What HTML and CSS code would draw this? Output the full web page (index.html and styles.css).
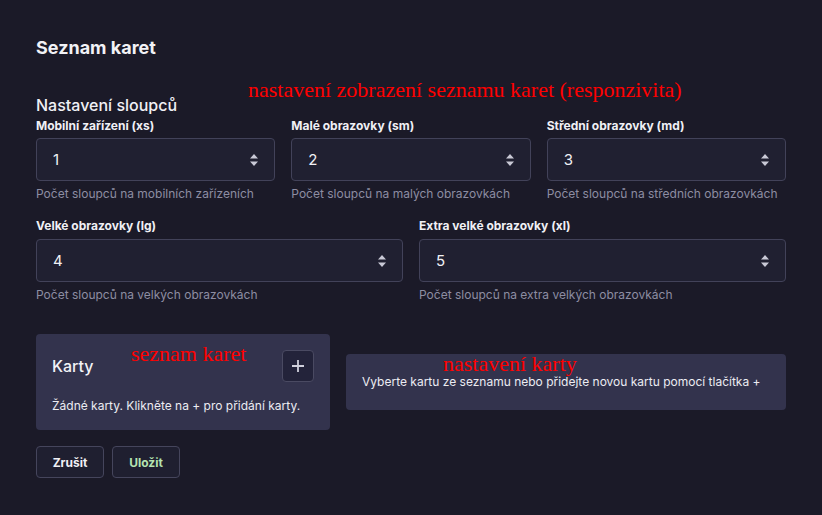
FILE: index.html
```html
<!DOCTYPE html>
<html lang="cs">
<head>
<meta charset="utf-8">
<link rel="stylesheet" href="styles.css">
</head>
<body>
<div class="page">
  <h1 class="title">Seznam karet</h1>
  <div class="section">
    <h2 class="subtitle">Nastavení sloupců</h2>
    <span class="note note-top">nastavení zobrazení seznamu karet (responzivita)</span>
    <div class="grid grid3">
      <div class="field">
        <label class="label">Mobilní zařízení (xs)</label>
        <div class="input"><span>1</span><svg class="spin" width="10" height="14" viewBox="0 0 10 14"><path d="M5 1 L9 5.5 H1 Z M5 13 L9 8.5 H1 Z" fill="#c9c9d6"/></svg></div>
        <div class="help">Počet sloupců na mobilních zařízeních</div>
      </div>
      <div class="field">
        <label class="label">Malé obrazovky (sm)</label>
        <div class="input"><span>2</span><svg class="spin" width="10" height="14" viewBox="0 0 10 14"><path d="M5 1 L9 5.5 H1 Z M5 13 L9 8.5 H1 Z" fill="#c9c9d6"/></svg></div>
        <div class="help">Počet sloupců na malých obrazovkách</div>
      </div>
      <div class="field">
        <label class="label">Střední obrazovky (md)</label>
        <div class="input"><span>3</span><svg class="spin" width="10" height="14" viewBox="0 0 10 14"><path d="M5 1 L9 5.5 H1 Z M5 13 L9 8.5 H1 Z" fill="#c9c9d6"/></svg></div>
        <div class="help">Počet sloupců na středních obrazovkách</div>
      </div>
    </div>
    <div class="grid grid2">
      <div class="field">
        <label class="label">Velké obrazovky (lg)</label>
        <div class="input"><span>4</span><svg class="spin" width="10" height="14" viewBox="0 0 10 14"><path d="M5 1 L9 5.5 H1 Z M5 13 L9 8.5 H1 Z" fill="#c9c9d6"/></svg></div>
        <div class="help">Počet sloupců na velkých obrazovkách</div>
      </div>
      <div class="field">
        <label class="label">Extra velké obrazovky (xl)</label>
        <div class="input"><span>5</span><svg class="spin" width="10" height="14" viewBox="0 0 10 14"><path d="M5 1 L9 5.5 H1 Z M5 13 L9 8.5 H1 Z" fill="#c9c9d6"/></svg></div>
        <div class="help">Počet sloupců na extra velkých obrazovkách</div>
      </div>
    </div>
  </div>

  <div class="cards">
    <div class="list-box">
      <span class="note note-list">seznam karet</span>
      <div class="list-head">
        <span class="list-title">Karty</span>
        <button class="add-btn"><svg width="14" height="14" viewBox="0 0 14 14"><path d="M7 1 V13 M1 7 H13" stroke="#d0d0dc" stroke-width="1.8"/></svg></button>
      </div>
      <div class="list-empty">Žádné karty. Klikněte na + pro přidání karty.</div>
    </div>
    <div class="detail-box">
      <span class="note note-detail">nastavení karty</span>
      Vyberte kartu ze seznamu nebo přidejte novou kartu pomocí tlačítka +
    </div>
  </div>

  <div class="actions">
    <button class="btn">Zrušit</button>
    <button class="btn btn-save">Uložit</button>
  </div>
</div>
</body>
</html>
```
FILE: styles.css
```css
* { box-sizing: border-box; }
html, body { margin: 0; padding: 0; }
body {
  background: #1b1a28;
  color: #ececf2;
  font-family: Inter, "Noto Sans", sans-serif;
  width: 822px;
  height: 515px;
  overflow: hidden;
}
.page {
  padding: 36px 36px 0 36px;
  width: 822px;
}
.title {
  margin: 0;
  font-size: 18px;
  line-height: 24px;
  font-weight: 700;
  color: #f2f2f6;
}
.section {
  position: relative;
  margin-top: 35px;
}
.subtitle {
  margin: 0;
  font-size: 16px;
  line-height: 20px;
  font-weight: 500;
  color: #f0f0f5;
}
.note {
  position: absolute;
  color: #ff0000;
  font-family: "Liberation Serif", serif;
  white-space: nowrap;
}
.note-top {
  left: 212px;
  top: -17px;
  font-size: 22px;
  line-height: 24px;
}
.grid {
  display: grid;
  column-gap: 16px;
}
.grid3 { grid-template-columns: repeat(3, 1fr); }
.grid2 { grid-template-columns: repeat(2, 1fr); margin-top: 16px; }
.field { display: flex; flex-direction: column; }
.label {
  font-size: 12px;
  line-height: 16px;
  font-weight: 700;
  color: #f0f0f5;
  margin-top: 3px;
  margin-bottom: 4px;
}
.grid2 .label { margin-top: 0; margin-bottom: 5px; }
.input {
  height: 43px;
  background: #202031;
  border: 1px solid #424259;
  border-radius: 4px;
  display: flex;
  align-items: center;
  justify-content: space-between;
  padding: 0 15px 0 16px;
  font-size: 15px;
  color: #f0f0f5;
}
.spin { display: block; }
.help {
  margin-top: 5px;
  font-size: 12px;
  line-height: 16px;
  color: #8d8da2;
}
.cards {
  display: flex;
  align-items: flex-start;
  gap: 16px;
  margin-top: 31px;
}
.list-box {
  position: relative;
  width: 294px;
  background: #33334d;
  border-radius: 4px;
  padding: 16px;
}
.list-head {
  display: flex;
  align-items: center;
  justify-content: space-between;
  height: 32px;
}
.list-title {
  font-size: 16px;
  font-weight: 500;
  color: #f2f2f6;
}
.add-btn {
  width: 32px;
  height: 32px;
  background: #23233a;
  border: 1px solid #4a4a62;
  border-radius: 4px;
  padding: 0;
  display: flex;
  align-items: center;
  justify-content: center;
}
.list-empty {
  margin-top: 16px;
  font-size: 12px;
  line-height: 16px;
  color: #ececf2;
}
.note-list {
  left: 95px;
  top: 8px;
  font-size: 22px;
  line-height: 24px;
}
.detail-box {
  position: relative;
  flex: 1;
  margin-top: 20px;
  height: 56px;
  background: #33334d;
  border-radius: 4px;
  padding: 20px 16px;
  font-size: 12px;
  line-height: 16px;
  color: #ececf2;
}
.note-detail {
  left: 97px;
  top: -2px;
  font-size: 22px;
  line-height: 24px;
}
.actions {
  display: flex;
  gap: 8px;
  margin-top: 16px;
}
.btn {
  height: 32px;
  width: 68px;
  background: #1f1f30;
  border: 1px solid #45455c;
  border-radius: 4px;
  font-family: Inter, "Noto Sans", sans-serif;
  font-size: 12px;
  font-weight: 700;
  color: #f0f0f5;
  padding: 0;
}
.btn-save { color: #b4e3b0; }
```
